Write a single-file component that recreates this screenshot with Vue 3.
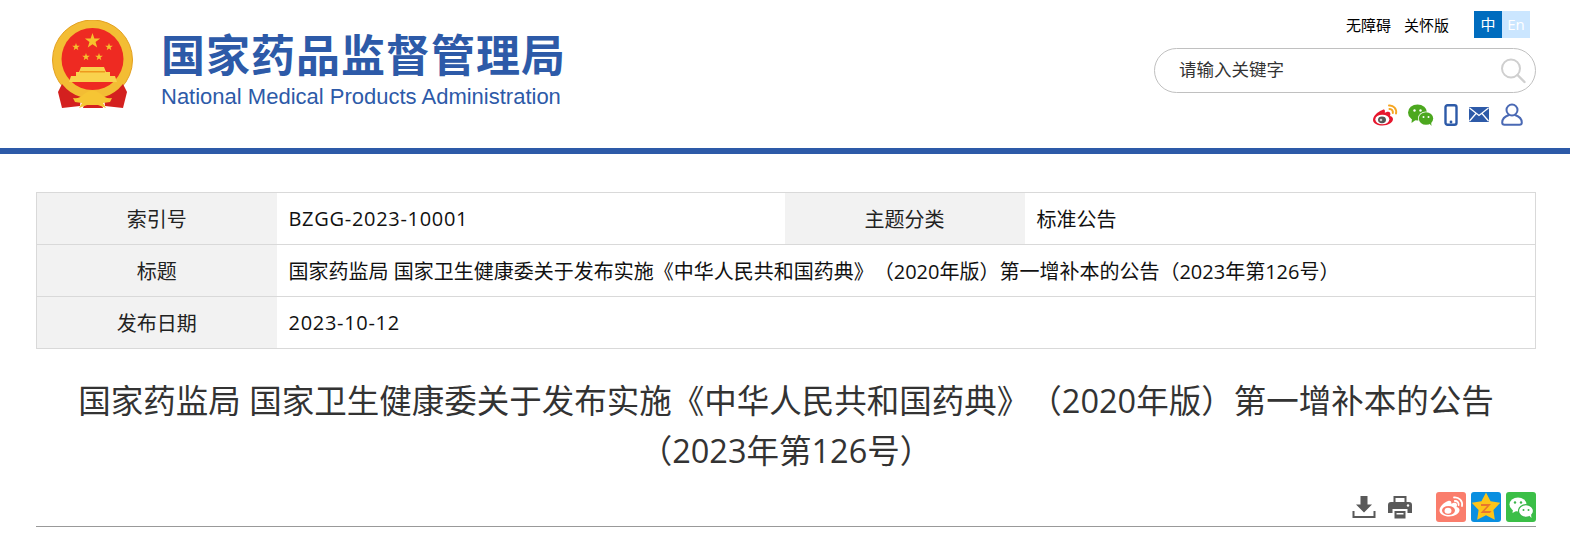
<template>
  <div class="page">
    <header class="head">
      <div class="brand">
        <svg class="emblem" viewBox="0 0 84 90" width="84" height="90">
          <circle cx="41.500" cy="40" r="40" fill="#f3bd34" />
          <circle cx="41.500" cy="40" r="40" fill="none" stroke="#e3a01f" stroke-width="1" />
          <circle cx="41.500" cy="39" r="31" fill="#ee2a22" />
          <polygon v-for="s in stars" :key="s.x" :points="star(s.x, s.y, s.r, 0.4)" fill="#f6c22c" />
          <path d="M30 47 H53 L55 52 H59 V56 H64 L66 62 H18 L20 56 H25 V52 H28 Z" fill="#f9d24d" />
          <rect x="29" y="51" width="25" height="1.500" fill="#ee9a1e" />
          <path d="M11 64 L7 72 L11 88 L29 86 L30 77 Q19 74 11 64 Z" fill="#d4201f" />
          <path d="M72 64 L76 72 L72 88 L54 86 L53 77 Q64 74 72 64 Z" fill="#d4201f" />
          <path d="M32 88 H52 L50 82 H34 Z" fill="#d4201f" />
          <path d="M22 78 Q29 79 33 74 Q41 67 50 74 Q54 79 61 78 L59 82 L52 83 L55 88 L47 85 L36 85 L28 88 L31 83 L24 82 Z" fill="#f6c534" />
        </svg>
        <div class="brand-text">
          <div class="brand-cn">国家药品监督管理局</div>
          <div class="brand-en">National Medical Products Administration</div>
        </div>
      </div>
      <div class="tools">
        <div class="top-links">
          <a>无障碍</a>
          <a>关怀版</a>
          <div class="lang">
            <span class="on">中</span>
            <span class="off">En</span>
          </div>
        </div>
        <div class="search">
          <span class="placeholder">请输入关键字</span>
          <svg viewBox="0 0 26 26" width="26" height="26" fill="none" stroke="#cfcfcf">
            <circle cx="11" cy="10.500" r="9" stroke-width="2" />
            <path d="M17.500 17 L24.500 24" stroke-width="2.400" stroke-linecap="round" />
          </svg>
        </div>
        <div class="socials">
          <svg viewBox="0 0 26 22" width="26" height="22">
            <path d="M10.500 6 C5 8 1 12.500 1 16 C1 19.500 5.500 21.500 10.500 21.500 C16.500 21.500 21 18.500 21 15 C21 12.800 18.800 12.200 18 12 C18.800 10 18.500 8 16.500 7.800 C15 7.600 13.500 8.500 12.800 8.800 C13.200 7 12.800 4.500 10.500 6 Z" fill="#e6162d" />
            <ellipse cx="10.300" cy="15.500" rx="7" ry="4.800" fill="#fff" />
            <ellipse cx="10" cy="15.800" rx="4" ry="3.400" fill="#555" />
            <circle cx="9" cy="16" r="1.300" fill="#ccc" />
            <path d="M17 1.500 C21.500 1 25 5 24 9.500 M17.500 5 C19.800 4.800 21.200 6.800 20.800 9" fill="none" stroke="#f5a623" stroke-width="2" stroke-linecap="round" />
          </svg>
          <svg viewBox="0 0 26 22" width="26" height="22">
            <ellipse cx="9.500" cy="8.500" rx="9.500" ry="8" fill="#4ca81f" />
            <path d="M4 14 L3.500 19 L9 15 Z" fill="#4ca81f" />
            <ellipse cx="18" cy="14.500" rx="8" ry="7" fill="#fff" />
            <ellipse cx="18" cy="14.500" rx="7.200" ry="6.300" fill="#4ca81f" />
            <path d="M21 19 L23.500 22 L23 17 Z" fill="#4ca81f" />
            <circle cx="6.500" cy="6.500" r="1.200" fill="#fff" />
            <circle cx="12.500" cy="6.500" r="1.200" fill="#fff" />
            <circle cx="15.500" cy="13" r="1" fill="#fff" />
            <circle cx="20.500" cy="13" r="1" fill="#fff" />
          </svg>
          <svg viewBox="0 0 14 22" width="14" height="22">
            <rect x="1.500" y="1.200" width="11" height="19.600" rx="2" fill="#fff" stroke="#2d5aa8" stroke-width="2.400" />
            <circle cx="7" cy="18" r="1.400" fill="#2d5aa8" />
          </svg>
          <svg viewBox="0 0 20 15" width="20" height="15">
            <rect width="20" height="15" rx="1" fill="#2d5aa8" />
            <path d="M0.500 1 L10 8.500 L19.500 1 M0.500 14 L7 6.500 M19.500 14 L13 6.500" fill="none" stroke="#fff" stroke-width="1.300" />
          </svg>
          <svg viewBox="0 0 22 23" width="22" height="23" fill="none" stroke="#4a69b4" stroke-width="2">
            <circle cx="11" cy="7" r="5.500" />
            <path d="M8 12 C3.500 13.500 1.200 16 1.200 19.500 C1.200 21 2 21.800 3.500 21.800 H18.500 C20 21.800 20.800 21 20.800 19.500 C20.800 16 18.500 13.500 14 12" />
          </svg>
        </div>
      </div>
    </header>
    <div class="bar"></div>

    <main class="main">
      <table class="info">
        <colgroup>
          <col style="width: 240px" />
          <col style="width: 508px" />
          <col style="width: 240px" />
          <col />
        </colgroup>
        <tbody>
          <tr>
            <th>索引号</th>
            <td class="code">BZGG-2023-10001</td>
            <th>主题分类</th>
            <td>标准公告</td>
          </tr>
          <tr>
            <th>标题</th>
            <td colspan="3">{{ fullTitle }}</td>
          </tr>
          <tr>
            <th>发布日期</th>
            <td colspan="3" class="code">2023-10-12</td>
          </tr>
        </tbody>
      </table>

      <h1 class="title">{{ fullTitle }}</h1>

      <div class="share">
        <svg viewBox="0 0 24 24" width="24" height="24" fill="#595959">
          <path d="M8.500 1 H15.500 V9.500 H20 L12 17.500 L4 9.500 H8.500 Z" />
          <path d="M1.500 16 V22 H22.500 V16" fill="none" stroke="#595959" stroke-width="2" />
        </svg>
        <svg class="print" viewBox="0 0 24 24" width="24" height="24" fill="#595959">
          <path d="M5.500 1 H18.500 V7 H16.500 V3 H7.500 V7 H5.500 Z" />
          <path d="M3 7 H21 Q24 7 24 10 V18 H19.500 V14 H4.500 V18 H0 V10 Q0 7 3 7 Z" />
          <path d="M6.500 16 H17.500 V23.500 H6.500 Z M8.500 18 V19.500 H15.500 V18 Z" />
          <circle cx="20" cy="10.500" r="1.200" fill="#fff" />
        </svg>
        <div class="tile weibo">
          <svg viewBox="0 0 30 30" width="30" height="30">
            <path d="M12 9 C7 11 3.500 15 3.500 18.500 C3.500 22 8 24.500 13 24.500 C19 24.500 23.500 21.500 23.500 18 C23.500 16 21.500 15.200 20.500 15 C21.500 13 21 11 19 10.800 C17.500 10.600 16 11.400 15.200 11.800 C15.800 9.500 14.500 8 12 9 Z" fill="#fff" />
            <ellipse cx="12.500" cy="18.500" rx="6.500" ry="4.500" fill="#fa7d6c" />
            <ellipse cx="12" cy="18.800" rx="3.500" ry="3" fill="#fff" />
            <path d="M18 5.500 C23 5 27 9 26 14 M18.800 9 C21.300 8.800 23 10.800 22.600 13" fill="none" stroke="#fff" stroke-width="1.800" stroke-linecap="round" />
          </svg>
        </div>
        <div class="tile qzone">
          <svg viewBox="0 0 30 30" width="30" height="30">
            <polygon :points="star(15, 15.500, 15, 0.52)" fill="#fcc419" />
            <path d="M10 12 H20 L13.500 19 H20.500 L19 21 H9.500 L16 14 H10 Z" fill="#e8772e" />
          </svg>
        </div>
        <div class="tile wechat">
          <svg viewBox="0 0 30 30" width="30" height="30">
            <ellipse cx="12" cy="12.500" rx="8.500" ry="7" fill="#fff" />
            <path d="M7 17 L6.500 21 L11 18.500 Z" fill="#fff" />
            <ellipse cx="20" cy="19" rx="7.500" ry="6.300" fill="#fff" stroke="#3bb54a" stroke-width="1.200" />
            <path d="M23 23.500 L25.500 26 L25 22 Z" fill="#fff" />
            <circle cx="9" cy="10.500" r="1.200" fill="#3bb54a" />
            <circle cx="15" cy="10.500" r="1.200" fill="#3bb54a" />
            <circle cx="17.500" cy="18" r="1" fill="#3bb54a" />
            <circle cx="22.500" cy="18" r="1" fill="#3bb54a" />
          </svg>
        </div>
      </div>
    </main>
  </div>
</template>

<script setup>
const fullTitle =
  "国家药监局 国家卫生健康委关于发布实施《中华人民共和国药典》（2020年版）第一增补本的公告（2023年第126号）";

const stars = [
  { x: 41.5, y: 21, r: 8 },
  { x: 25, y: 27, r: 4 },
  { x: 58, y: 27, r: 4 },
  { x: 35, y: 37, r: 4 },
  { x: 48, y: 37, r: 4 },
];

function star(cx, cy, r, inner) {
  const pts = [];
  for (let i = 0; i < 10; i++) {
    const len = i % 2 ? r * inner : r;
    const a = (Math.PI / 5) * i - Math.PI / 2;
    pts.push((cx + len * Math.cos(a)).toFixed(2) + "," + (cy + len * Math.sin(a)).toFixed(2));
  }
  return pts.join(" ");
}
</script>

<style scoped>
.page {
  width: 1570px;
  font-family: "Open Sans", "Noto Sans CJK SC", sans-serif;
  color: #333;
  text-spacing-trim: space-all;
}

.head {
  height: 148px;
  display: flex;
  justify-content: space-between;
  padding: 0 34px 0 51px;
  box-sizing: border-box;
}

.brand {
  display: flex;
  align-items: flex-start;
  padding-top: 20px;
}

.emblem {
  display: block;
  margin-right: 26px;
}

.brand-text {
  width: 402px;
  padding-top: 8px;
  color: #2d5aa8;
}

.brand-cn {
  font-family: "Noto Sans CJK SC", sans-serif;
  font-size: 44px;
  line-height: 50px;
  font-weight: 700;
  white-space: nowrap;
  letter-spacing: 1px;
}

.brand-en {
  font-family: "Liberation Sans", sans-serif;
  font-size: 22px;
  line-height: 26px;
  margin-top: 6px;
  white-space: nowrap;
}

.tools {
  width: 382px;
  padding-top: 11px;
}

.top-links {
  height: 27px;
  display: flex;
  justify-content: flex-end;
  align-items: center;
  gap: 13px;
  padding-right: 6px;
  font-size: 15px;
  color: #000;
}

.lang {
  display: flex;
  margin-left: 12px;
  font-size: 15px;
  line-height: 27px;
  color: #fff;
}

.lang span {
  width: 28px;
  text-align: center;
}

.on {
  background: #006cbe;
}

.off {
  background: #cbe6ff;
}

.search {
  height: 45px;
  margin-top: 10px;
  box-sizing: border-box;
  border: 1.5px solid #c0c0c0;
  border-radius: 23px;
  display: flex;
  align-items: center;
  justify-content: space-between;
  padding: 0 9px 5px 24px;
  font-size: 17.5px;
  color: #333;
}

.search svg {
  margin-top: 5px;
}

.socials {
  display: flex;
  align-items: center;
  justify-content: flex-end;
  gap: 10px;
  margin-top: 10px;
  padding-right: 13px;
}

.socials svg:nth-child(4) {
  margin-right: 2px;
  margin-left: 1px;
}

.bar {
  height: 6px;
  background: #2d5aa8;
}

.main {
  padding: 38px 34px 0 36px;
}

.info {
  width: 1500px;
  table-layout: fixed;
  border-collapse: collapse;
  border: 1px solid #d9d9d9;
  font-size: 20px;
  color: #222;
}

.info th,
.info td {
  height: 51px;
  padding: 0;
  border-top: 1px solid #d9d9d9;
  border-bottom: 1px solid #d9d9d9;
  font-weight: 400;
  white-space: nowrap;
}

.info th {
  background: #f2f2f2;
  text-align: center;
}

.info td {
  padding-left: 12px;
  color: #111;
}

.info .code {
  letter-spacing: 0.7px;
}

.title {
  margin: 27px 0 0;
  font-size: 32.5px;
  line-height: 50px;
  font-weight: 400;
  text-align: center;
  color: #333;
}

.share {
  display: flex;
  justify-content: flex-end;
  align-items: center;
  margin-top: 15px;
  height: 36px;
  padding-bottom: 3px;
  border-bottom: 1px solid #999;
  box-sizing: border-box;
}

.print {
  margin-left: 12px;
  margin-right: 19px;
}

.tile {
  width: 30px;
  height: 30px;
  border-radius: 3px;
  margin-left: 5px;
}

.tile svg {
  display: block;
}

.weibo {
  background: #fa7d6c;
}

.qzone {
  background: #0a8fe0;
}

.wechat {
  background: #3bbf47;
}
</style>

<style>
html,
body {
  background: #fff;
}
</style>
